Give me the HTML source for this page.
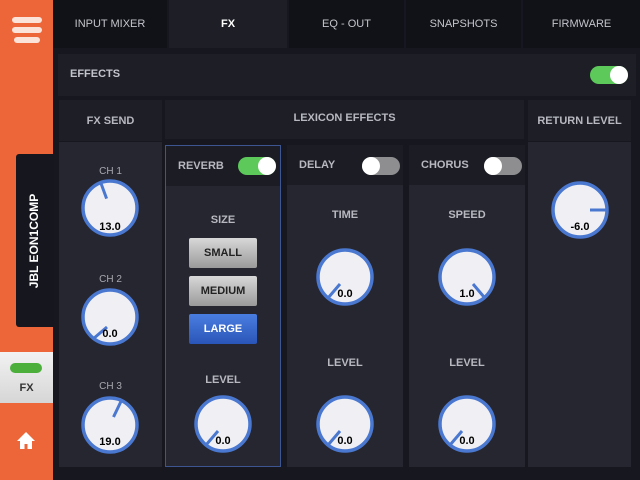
<!DOCTYPE html><html><head><style>
*{margin:0;padding:0;box-sizing:border-box}
body{width:640px;height:480px;background:#17171f;font-family:"Liberation Sans",sans-serif;position:relative;overflow:hidden}
.a{position:absolute}
.t{color:#b8b9c0;font-size:11px;font-weight:bold;text-align:center}
.tab{position:absolute;top:0;height:48px;line-height:48px;background:#111218;color:#c4c5cc;font-size:11px;text-align:center}
.box{position:absolute;background:#1d1e26}
.pan{position:absolute;background:#25262f}
.hd{position:absolute;left:0;right:0;top:0;height:40px;background:#1b1c24;color:#b8b9c0;font-size:11px;font-weight:bold;line-height:40px;padding-left:12px}
.sw{position:absolute;width:38px;height:18px;border-radius:9px}
.sw i{position:absolute;top:0;width:18px;height:18px;border-radius:9px;background:#fff}
.btn{position:absolute;left:189px;width:68px;height:30px;border-radius:2px;font-size:11px;font-weight:bold;text-align:center;line-height:30px}
</style></head><body>
<div class="a" style="left:0;top:0;width:53px;height:480px;background:#ec6639"></div>
<div class="a" style="left:12px;top:17px;width:30px;height:6px;border-radius:3px;background:#fbe3da"></div>
<div class="a" style="left:12px;top:27px;width:30px;height:6px;border-radius:3px;background:#fbe3da"></div>
<div class="a" style="left:14px;top:37px;width:26px;height:6px;border-radius:3px;background:#fbe3da"></div>
<div class="a" style="left:16px;top:154px;width:38px;height:173px;background:#16171e;border-radius:3px 0 0 3px"></div>
<div class="a" style="left:34px;top:241px;transform:translate(-50%,-50%) rotate(-90deg);color:#fff;font-size:12px;font-weight:bold;white-space:nowrap">JBL EON1COMP</div>
<div class="a" style="left:0;top:352px;width:53px;height:51px;background:linear-gradient(#f2f2f2,#d6d6d6)"></div>
<div class="a" style="left:10px;top:363px;width:32px;height:10px;border-radius:5px;background:#4caf3c"></div>
<div class="a t" style="left:0;top:382px;width:53px;color:#333">FX</div>
<svg class="a" style="left:16px;top:431px" width="20" height="20" viewBox="0 0 20 20"><path d="M10 1L1 10h3v8h4.5v-5h3v5H16v-8h3z" fill="#fff"/></svg>

<div class="tab" style="left:53px;width:114px">INPUT MIXER</div>
<div class="tab" style="left:169px;width:118px;background:#1d1e26;color:#fff;font-weight:bold">FX</div>
<div class="tab" style="left:289px;width:115px">EQ - OUT</div>
<div class="tab" style="left:406px;width:115px">SNAPSHOTS</div>
<div class="tab" style="left:523px;width:117px">FIRMWARE</div>

<div class="box" style="left:58px;top:54px;width:578px;height:42px"></div>
<div class="a t" style="left:70px;top:68px;color:#c4c5cc">EFFECTS</div>
<div class="sw" style="left:590px;top:66px;background:#5cc95a"><i style="right:0"></i></div>

<div class="box" style="left:59px;top:100px;width:103px;height:41px"></div>
<div class="a t" style="left:59px;top:115px;width:103px">FX SEND</div>
<div class="box" style="left:165px;top:100px;width:359px;height:39px"></div>
<div class="a t" style="left:165px;top:112px;width:359px">LEXICON EFFECTS</div>
<div class="box" style="left:528px;top:100px;width:103px;height:41px"></div>
<div class="a t" style="left:528px;top:115px;width:103px">RETURN LEVEL</div>

<div class="pan" style="left:59px;top:142px;width:103px;height:325px"></div>
<div class="pan" style="left:528px;top:142px;width:103px;height:325px"></div>
<div class="pan" style="left:165px;top:145px;width:116px;height:322px;border:1px solid #3d5590"><div class="hd">REVERB</div></div>
<div class="pan" style="left:287px;top:145px;width:116px;height:322px"><div class="hd">DELAY</div></div>
<div class="pan" style="left:409px;top:145px;width:116px;height:322px"><div class="hd">CHORUS</div></div>
<div class="sw" style="left:238px;top:157px;background:#5cc95a"><i style="right:0"></i></div>
<div class="sw" style="left:362px;top:157px;background:#8e8e90"><i style="left:0"></i></div>
<div class="sw" style="left:484px;top:157px;background:#8e8e90"><i style="left:0"></i></div>

<div class="a t" style="left:59px;top:166px;width:103px;font-size:10px;font-weight:normal;color:#a8a9b0">CH 1</div>
<div class="a t" style="left:59px;top:274px;width:103px;font-size:10px;font-weight:normal;color:#a8a9b0">CH 2</div>
<div class="a t" style="left:59px;top:381px;width:103px;font-size:10px;font-weight:normal;color:#a8a9b0">CH 3</div>
<div class="a t" style="left:165px;top:214px;width:116px">SIZE</div>
<div class="a t" style="left:165px;top:374px;width:116px">LEVEL</div>
<div class="a t" style="left:287px;top:209px;width:116px">TIME</div>
<div class="a t" style="left:287px;top:357px;width:116px">LEVEL</div>
<div class="a t" style="left:409px;top:209px;width:116px">SPEED</div>
<div class="a t" style="left:409px;top:357px;width:116px">LEVEL</div>

<div class="btn" style="top:238px;background:linear-gradient(#d8d8d8,#9a9a9a);color:#222">SMALL</div>
<div class="btn" style="top:276px;background:linear-gradient(#d8d8d8,#9a9a9a);color:#222">MEDIUM</div>
<div class="btn" style="top:314px;background:linear-gradient(#4a7de0,#2a55b8);color:#fff">LARGE</div>

<svg class="a" style="left:0;top:0" width="640" height="480" font-family="Liberation Sans" font-weight="bold" font-size="11" text-anchor="middle">
<defs><g id="k"><circle r="27" fill="#f0f0f4" stroke="#4a78d0" stroke-width="3.5"/></g></defs>
<g transform="translate(110,208)"><use href="#k"/><line x1="-3.4" y1="-9.4" x2="-8.9" y2="-24.4" stroke="#4a78d0" stroke-width="3"/><text y="22">13.0</text></g>
<g transform="translate(110,317)"><use href="#k"/><line x1="-3" y1="10" x2="-17" y2="22" stroke="#4a78d0" stroke-width="3"/><text x="0" y="20">0.0</text></g>
<g transform="translate(110,425)"><use href="#k"/><line x1="3.5" y1="-8" x2="11" y2="-23.6" stroke="#4a78d0" stroke-width="3"/><text y="20">19.0</text></g>
<g transform="translate(223,424)"><use href="#k"/><line x1="-5" y1="7" x2="-17" y2="21" stroke="#4a78d0" stroke-width="3"/><text x="0" y="20">0.0</text></g>
<g transform="translate(345,277)"><use href="#k"/><line x1="-5" y1="7" x2="-17" y2="21" stroke="#4a78d0" stroke-width="3"/><text x="0" y="20">0.0</text></g>
<g transform="translate(345,424)"><use href="#k"/><line x1="-5" y1="7" x2="-17" y2="21" stroke="#4a78d0" stroke-width="3"/><text x="0" y="20">0.0</text></g>
<g transform="translate(467,277)"><use href="#k"/><line x1="6" y1="7" x2="17" y2="20" stroke="#4a78d0" stroke-width="3"/><text y="20">1.0</text></g>
<g transform="translate(467,424)"><use href="#k"/><line x1="-5" y1="7" x2="-17" y2="21" stroke="#4a78d0" stroke-width="3"/><text x="0" y="20">0.0</text></g>
<g transform="translate(580,210)"><use href="#k"/><line x1="10" y1="0" x2="27" y2="0" stroke="#4a78d0" stroke-width="3"/><text y="20">-6.0</text></g>
</svg>
</body></html>
